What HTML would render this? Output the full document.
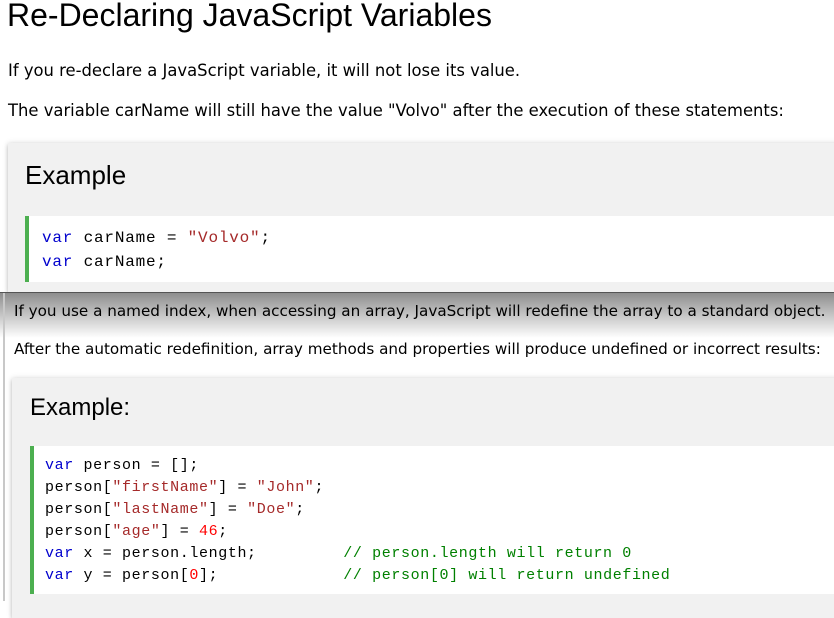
<!DOCTYPE html>
<html><head><style>
body{margin:0;width:834px;height:601px;overflow:hidden;background:#fff;position:relative;font-family:"DejaVu Sans",Verdana,sans-serif;color:#000}
.a{position:absolute;white-space:pre}
h1{position:absolute;margin:0;left:7px;top:-3px;font:32px "Liberation Sans",Arial,sans-serif;white-space:nowrap}
.p{font-size:16.4px}
.box{position:absolute;background:#f1f1f1;box-shadow:0 2px 4px rgba(0,0,0,.2),0 0 6px rgba(0,0,0,.12)}
.code{position:absolute;background:#fff;border-left:4px solid #4CAF50;font-family:"Liberation Mono","Courier New",monospace;color:#000}
.k{color:mediumblue}.s{color:brown}.n{color:red}.c{color:green}
</style></head><body>
<h1>Re-Declaring JavaScript Variables</h1>
<div class="a p" style="left:8px;top:61px">If you re-declare a JavaScript variable, it will not lose its value.</div>
<div class="a p" style="left:8px;top:101px">The variable carName will still have the value "Volvo" after the execution of these statements:</div>
<div class="box" style="left:8px;top:143px;width:840px;height:150px">
 <div class="a" style="left:17px;top:17px;font:26px 'Liberation Sans',Arial,sans-serif">Example</div>
 <div class="code" style="left:17px;top:73px;width:830px;height:66px;font-size:16px;letter-spacing:0.8px;line-height:24px"><div class="a" style="left:13px;top:10px"><span class="k">var</span> carName = <span class="s">"Volvo"</span>;
<span class="k">var</span> carName;</div></div>
</div>
<div style="position:absolute;left:0;top:292px;width:834px;height:309px;background:#fff;border-top:1px solid #555"></div>
<div style="position:absolute;left:0;top:293px;width:834px;height:45px;background:linear-gradient(#8e8e8e,rgba(255,255,255,0))"></div>
<div style="position:absolute;left:3px;top:293px;width:2px;height:308px;background:#c8c8c8"></div>
<div class="a" style="left:14px;top:302px;font-size:15.2px">If you use a named index, when accessing an array, JavaScript will redefine the array to a standard object.</div>
<div class="a" style="left:14px;top:340px;font-size:15.2px">After the automatic redefinition, array methods and properties will produce undefined or incorrect results:</div>
<div class="box" style="left:12px;top:378px;width:840px;height:240px">
 <div class="a" style="left:18px;top:16px;font:24px 'Liberation Sans',Arial,sans-serif">Example:</div>
 <div class="code" style="left:18px;top:68px;width:830px;height:148px;font-size:15px;letter-spacing:0.62px;line-height:22px"><div class="a" style="left:11px;top:9px"><span class="k">var</span> person = [];
person[<span class="s">"firstName"</span>] = <span class="s">"John"</span>;
person[<span class="s">"lastName"</span>] = <span class="s">"Doe"</span>;
person[<span class="s">"age"</span>] = <span class="n">46</span>;
<span class="k">var</span> x = person.length;         <span class="c">// person.length will return 0</span>
<span class="k">var</span> y = person[<span class="n">0</span>];             <span class="c">// person[0] will return undefined</span></div></div>
</div>
</body></html>
